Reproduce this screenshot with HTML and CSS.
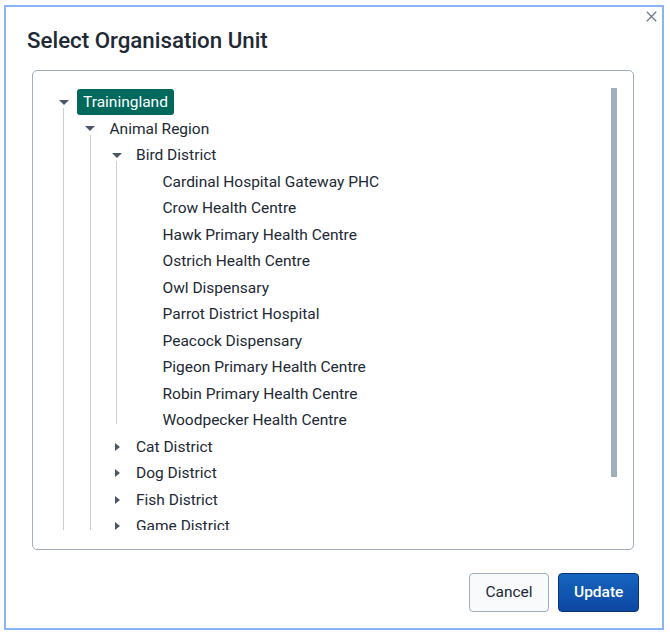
FILE: index.html
```html
<!DOCTYPE html>
<html lang="en">
<head>
<meta charset="utf-8">
<title>Select Organisation Unit</title>
<link rel="stylesheet" href="styles.css">
</head>
<body>
<div class="modal">
  <button class="close" aria-label="Close">
    <svg width="11" height="11" viewBox="0 0 11 11"><path d="M0.8 0.8 L10.2 10.2 M10.2 0.8 L0.8 10.2" stroke="#6e7a8a" stroke-width="1.3" fill="none"/></svg>
  </button>
  <h1 class="title">Select Organisation Unit</h1>
  <div class="tree-box">
    <div class="tree">
      <div class="node">
        <div class="toggle-col"><span class="toggle"><i class="tri-down"></i></span><span class="line"></span></div>
        <div class="node-body">
          <div class="row"><span class="label selected">Trainingland</span></div>
          <div class="node">
            <div class="toggle-col"><span class="toggle"><i class="tri-down"></i></span><span class="line"></span></div>
            <div class="node-body">
              <div class="row"><span class="label">Animal Region</span></div>
              <div class="node">
                <div class="toggle-col"><span class="toggle"><i class="tri-down"></i></span><span class="line short"></span></div>
                <div class="node-body">
                  <div class="row"><span class="label">Bird District</span></div>
                  <div class="row leaf"><span class="label">Cardinal Hospital Gateway PHC</span></div>
                  <div class="row leaf"><span class="label">Crow Health Centre</span></div>
                  <div class="row leaf"><span class="label">Hawk Primary Health Centre</span></div>
                  <div class="row leaf"><span class="label">Ostrich Health Centre</span></div>
                  <div class="row leaf"><span class="label">Owl Dispensary</span></div>
                  <div class="row leaf"><span class="label">Parrot District Hospital</span></div>
                  <div class="row leaf"><span class="label">Peacock Dispensary</span></div>
                  <div class="row leaf"><span class="label">Pigeon Primary Health Centre</span></div>
                  <div class="row leaf"><span class="label">Robin Primary Health Centre</span></div>
                  <div class="row leaf"><span class="label">Woodpecker Health Centre</span></div>
                </div>
              </div>
              <div class="node">
                <div class="toggle-col"><span class="toggle"><i class="tri-right"></i></span></div>
                <div class="node-body"><div class="row"><span class="label">Cat District</span></div></div>
              </div>
              <div class="node">
                <div class="toggle-col"><span class="toggle"><i class="tri-right"></i></span></div>
                <div class="node-body"><div class="row"><span class="label">Dog District</span></div></div>
              </div>
              <div class="node">
                <div class="toggle-col"><span class="toggle"><i class="tri-right"></i></span></div>
                <div class="node-body"><div class="row"><span class="label">Fish District</span></div></div>
              </div>
              <div class="node">
                <div class="toggle-col"><span class="toggle"><i class="tri-right"></i></span></div>
                <div class="node-body"><div class="row"><span class="label">Game District</span></div></div>
              </div>
            </div>
          </div>
        </div>
      </div>
    </div>
    <div class="scrollbar"></div>
  </div>
  <div class="actions">
    <button class="btn secondary">Cancel</button>
    <button class="btn primary">Update</button>
  </div>
</div>
</body>
</html>
```
FILE: styles.css
```css
* { box-sizing: border-box; }
html, body { margin: 0; padding: 0; background: #ffffff; }
body { font-family: Roboto, "Noto Sans", sans-serif; color: #212934; }

.modal {
  position: relative;
  margin: 5px 0 0 4px;
  width: 660px;
  height: 625px;
  border: 2px solid #8ab4f8;
  padding: 0 23px 16px 20px;
  display: flex;
  flex-direction: column;
  background: #fff;
}

.close {
  position: absolute;
  top: 2px;
  right: 3px;
  width: 15px;
  height: 15px;
  padding: 0;
  border: 0;
  background: transparent;
  display: flex;
  align-items: center;
  justify-content: center;
}

.title {
  margin: 0 0 0 1px;
  padding-top: 20px;
  font-size: 22.3px;
  line-height: 26px;
  font-weight: 500;
  color: #212934;
}

.tree-box {
  margin: 17px 5px 0 6px;
  height: 480px;
  border: 1px solid #a0adba;
  border-radius: 5px;
  padding: 18px 16px 19px 17.5px;
  display: flex;
}

.tree {
  flex: 1;
  height: 441px;
  overflow: hidden;
}

.scrollbar {
  width: 6px;
  height: 389px;
  margin-top: -1px;
  background: #a0adba;
  flex: none;
}

.node { display: flex; }
.toggle-col {
  width: 26.5px;
  flex: none;
  display: flex;
  flex-direction: column;
  align-items: center;
}
.toggle {
  height: 26.5px;
  width: 26.5px;
  display: flex;
  align-items: center;
  justify-content: center;
  flex: none;
}
.tri-down {
  width: 0; height: 0;
  border-left: 5px solid transparent;
  border-right: 5px solid transparent;
  border-top: 5px solid #4a5768;
}
.tri-right {
  width: 0; height: 0;
  border-top: 4.5px solid transparent;
  border-bottom: 4.5px solid transparent;
  border-left: 5px solid #4a5768;
  margin-left: 1px;
}
.line {
  flex: 1;
  width: 1px;
  background: #c9ced4;
  margin-top: -7.5px;
}
.line.short { margin-bottom: 9.5px; }

.node-body { flex: 1; min-width: 0; }
.row {
  height: 26.5px;
  display: flex;
  align-items: center;
}
.row.leaf { padding-left: 26.5px; }
.label {
  padding: 0 6px;
  height: 26px;
  line-height: 26px;
  font-size: 15.5px;
  white-space: nowrap;
  border-radius: 3px;
  color: #212934;
}
.label.selected {
  background: #00695c;
  color: #ffffff;
}

.actions {
  margin-top: 23px;
  display: flex;
  justify-content: flex-end;
  gap: 9px;
}
.btn {
  height: 39px;
  padding: 0 15px;
  font-family: Roboto, "Noto Sans", sans-serif;
  font-size: 15.5px;
  line-height: 37px;
  border-radius: 4px;
  cursor: pointer;
}
.btn.secondary {
  width: 80px;
  background: #f9fafb;
  border: 1px solid #a0adba;
  color: #212934;
}
.btn.primary {
  width: 81px;
  background: linear-gradient(180deg, #1565c0 0%, #0d47a1 100%);
  border: 1px solid #093371;
  color: #ffffff;
  font-weight: 500;
}
```
